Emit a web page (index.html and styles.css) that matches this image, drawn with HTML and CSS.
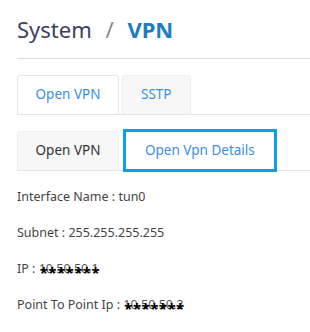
FILE: index.html
```html
<!DOCTYPE html>
<html lang="en">
<head>
    <meta charset="UTF-8">
    <meta name="viewport" content="width=device-width, initial-scale=1.0">
    <title>System / VPN</title>
    <link rel="stylesheet" href="styles.css">
</head>
<body>
<div class="page">
    <h1 class="title">System <span class="sep">/</span> <span class="current">VPN</span></h1>

    <!-- top tabs -->
    <ul class="tabs">
        <li class="tab active">Open VPN</li>
        <li class="tab">SSTP</li>
    </ul>

    <!-- inner tabs -->
    <ul class="tabs sub">
        <li class="tab">Open VPN</li>
        <li class="tab active focus">Open Vpn Details</li>
    </ul>

    <div class="details">
        <p>Interface Name : tun0</p>
        <p>Subnet : 255.255.255.255</p>
        <p>IP : <span class="masked">10.50.50.1<span class="stars">*******</span></span></p>
        <p>Point To Point Ip : <span class="masked">10.50.50.2<span class="stars">*******</span></span></p>
    </div>
</div>
</body>
</html>
```

FILE: styles.css
```css
body {
    margin: 0;
    font-family: "Noto Sans", sans-serif;
    color: #444;
    background: #fff;
}
.page {
    padding: 0 0 0 17px;
}
.title {
    margin: 0;
    padding: 14px 0 13px;
    font-size: 22px;
    font-weight: normal;
    color: #3b3f63;
    border-bottom: 1px solid #ddd;
    line-height: 31px;
}
.title .sep {
    color: #888;
    margin: 0 8px;
}
.title .current {
    color: #1d7cc4;
    font-weight: bold;
}
.tabs {
    list-style: none;
    margin: 16px 0 0;
    padding: 0;
    display: flex;
    border-bottom: 1px solid #e6e6e6;
}
.tab {
    box-sizing: border-box;
    height: 39px;
    line-height: 37px;
    padding: 0 18px;
    margin-right: 3px;
    font-size: 13.5px;
    color: #3a8ee6;
    background: #f7f7f7;
    border: 1px solid #eee;
    border-bottom: none;
    border-radius: 3px 3px 0 0;
}
.tab.active {
    background: #fff;
    border-color: #e6e6e6;
}
.tabs .tab:first-child {
    width: 102px;
    padding: 0;
    text-align: center;
}
.sub {
    margin-top: 16px;
}
.sub .tab:first-child {
    color: #333;
    margin-right: 6px;
}
.tab.focus {
    position: relative;
    padding: 0 19px;
}
.tab.focus::after {
    content: "";
    position: absolute;
    top: -3px;
    left: -3px;
    right: -3px;
    bottom: -2px;
    border: 3px solid #0aa0e2;
}
.details {
    padding-top: 8px;
}
.details p {
    margin: 0;
    height: 36px;
    line-height: 36px;
    font-size: 12.5px;
}
.masked {
    position: relative;
    color: #555;
}
.stars {
    position: absolute;
    left: 1px;
    top: 50%;
    margin-top: -4px;
    line-height: 14px;
    font-size: 15px;
    color: #000;
    font-weight: bold;
    letter-spacing: 0.5px;
    white-space: nowrap;
}
```
